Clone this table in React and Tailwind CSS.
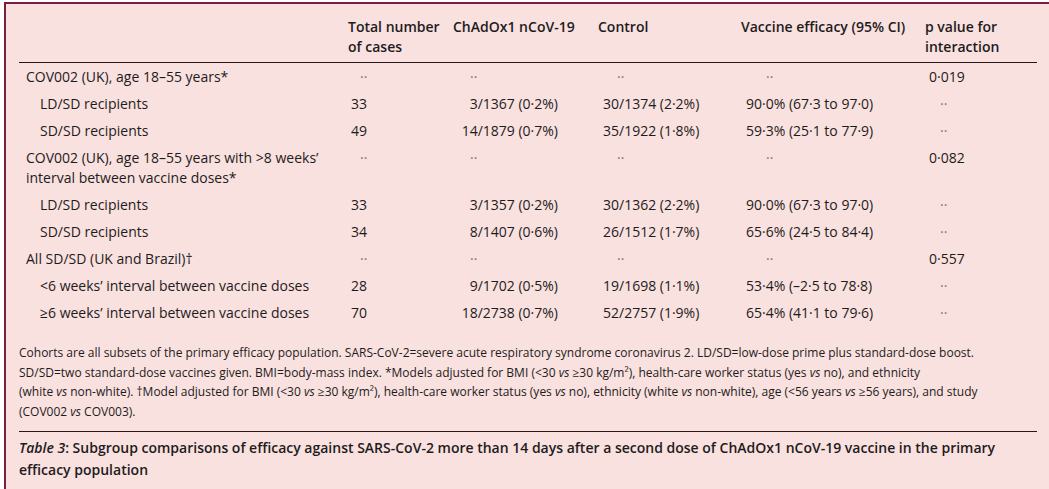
const rows = [
    { label: 'COV002 (UK), age 18–55 years*', total: null, chad: null, control: null, ve: null, p: '0·019' },
    { label: 'LD/SD recipients', sub: true, total: '33', chad: '3/1367 (0·2%)', control: '30/1374 (2·2%)', ve: '90·0% (67·3 to 97·0)', p: null },
    { label: 'SD/SD recipients', sub: true, total: '49', chad: '14/1879 (0·7%)', control: '35/1922 (1·8%)', ve: '59·3% (25·1 to 77·9)', p: null },
    { label: ['COV002 (UK), age 18–55 years with >8 weeks’', 'interval between vaccine doses*'], total: null, chad: null, control: null, ve: null, p: '0·082' },
    { label: 'LD/SD recipients', sub: true, total: '33', chad: '3/1357 (0·2%)', control: '30/1362 (2·2%)', ve: '90·0% (67·3 to 97·0)', p: null },
    { label: 'SD/SD recipients', sub: true, total: '34', chad: '8/1407 (0·6%)', control: '26/1512 (1·7%)', ve: '65·6% (24·5 to 84·4)', p: null },
    { label: 'All SD/SD (UK and Brazil)†', total: null, chad: null, control: null, ve: null, p: '0·557' },
    { label: '<6 weeks’ interval between vaccine doses', sub: true, total: '28', chad: '9/1702 (0·5%)', control: '19/1698 (1·1%)', ve: '53·4% (–2·5 to 78·8)', p: null },
    { label: '≥6 weeks’ interval between vaccine doses', sub: true, total: '70', chad: '18/2738 (0·7%)', control: '52/2757 (1·9%)', ve: '65·4% (41·1 to 79·6)', p: null },
];

const grid = 'grid grid-cols-[329px_105px_145px_143px_184px_112px]';

function Dots({ className }) {
    return <span className={`text-[#777] ${className}`}>··</span>;
}

function Vs() {
    return <i>vs</i>;
}

export default function App() {
    return (
        <div className="h-[489px] w-[1049px] overflow-hidden bg-white pt-[2px] pl-[4px]" style={{ fontFamily: '"Open Sans", "Noto Sans", sans-serif' }}>
            <div className="h-[487px] border-t-2 border-l-2 border-[#7a1d40] bg-[#f8e1df] pl-[13px] text-[#1f1b1c]">
                <div className="w-[1018px]">
                    {/* header */}
                    <div className={`${grid} border-b-[1.5px] border-[#2a1818] pt-[13px] pb-[5px] text-[14px] leading-5 font-semibold`}>
                        <div />
                        <div>Total number<br />of cases</div>
                        <div>ChAdOx1 nCoV-19</div>
                        <div>Control</div>
                        <div>Vaccine efficacy (95% CI)</div>
                        <div>p value for<br />interaction</div>
                    </div>

                    {/* body */}
                    <div className="text-[14px] leading-5">
                        {rows.map((r, i) => (
                            <div key={i} className={`${grid} py-[3.5px]`}>
                                <div className={r.sub ? 'pl-[21px]' : 'pl-[7px]'}>
                                    {Array.isArray(r.label) ? r.label.map((l) => <div key={l}>{l}</div>) : r.label}
                                </div>
                                <div>{r.total ? <span className="pl-[3px]">{r.total}</span> : <Dots className="pl-[12px]" />}</div>
                                <div>{r.chad ? <div className="pr-[40px] text-right">{r.chad}</div> : <Dots className="pl-[17px]" />}</div>
                                <div>{r.control ? <span className="pl-[5px]">{r.control}</span> : <Dots className="pl-[19px]" />}</div>
                                <div>{r.ve ? <span className="pl-[5px]">{r.ve}</span> : <Dots className="pl-[25px]" />}</div>
                                <div>{r.p ? <span className="pl-[4px]">{r.p}</span> : <Dots className="pl-[15px]" />}</div>
                            </div>
                        ))}
                    </div>

                    {/* footnote */}
                    <div className="mt-[17px] pb-[10px] text-[12px] leading-[19.5px] whitespace-nowrap">
                        <div>Cohorts are all subsets of the primary efficacy population. SARS-CoV-2=severe acute respiratory syndrome coronavirus 2. LD/SD=low-dose prime plus standard-dose boost.</div>
                        <div>SD/SD=two standard-dose vaccines given. BMI=body-mass index. *Models adjusted for BMI (&lt;30 <Vs /> ≥30 kg/m²), health-care worker status (yes <Vs /> no), and ethnicity</div>
                        <div>(white <Vs /> non-white). †Model adjusted for BMI (&lt;30 <Vs /> ≥30 kg/m²), health-care worker status (yes <Vs /> no), ethnicity (white <Vs /> non-white), age (&lt;56 years <Vs /> ≥56 years), and study</div>
                        <div>(COV002 <Vs /> COV003).</div>
                    </div>

                    {/* caption */}
                    <div className="border-t-[1.5px] border-[#2a1818] pt-[5px] text-[14px] leading-[22px] font-semibold whitespace-nowrap">
                        <div><i>Table 3</i>: Subgroup comparisons of efficacy against SARS-CoV-2 more than 14 days after a second dose of ChAdOx1 nCoV-19 vaccine in the primary</div>
                        <div>efficacy population</div>
                    </div>
                </div>
            </div>
        </div>
    );
}
